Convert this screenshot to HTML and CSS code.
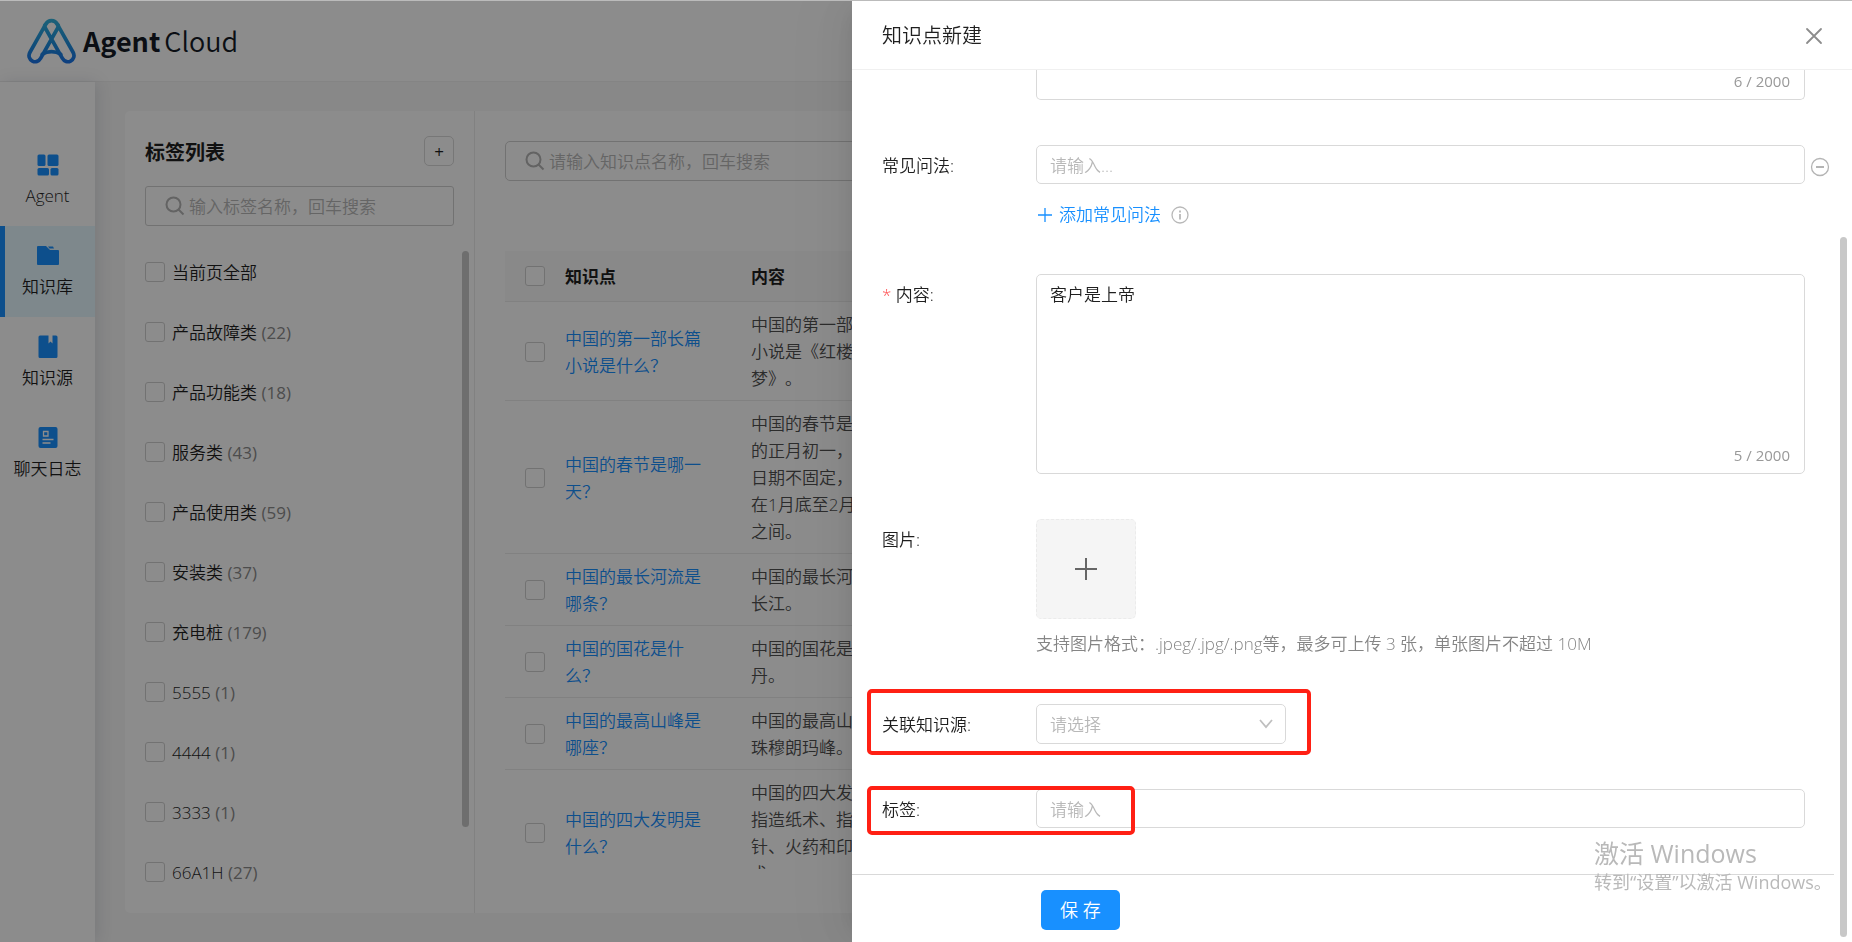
FILE: index.html
```html
<!DOCTYPE html>
<html lang="zh-CN">
<head>
<meta charset="utf-8">
<title>Agent Cloud</title>
<link rel="stylesheet" href="styles.css">
</head>
<body>
<div class="app">
  <header class="topbar">
    <svg class="logo" viewBox="0 0 50 47" width="49" height="46" fill="none" stroke="url(#lg)" stroke-width="3.800" stroke-linecap="round" stroke-linejoin="round">
      <defs><linearGradient id="lg" gradientUnits="userSpaceOnUse" x1="0" y1="0" x2="0" y2="47"><stop offset="0" stop-color="#35b4dc"/><stop offset=".55" stop-color="#1f8fdc"/><stop offset="1" stop-color="#1a72e8"/></linearGradient></defs>
      <path d="M31.500 10 14 41C12 44.500 8.500 45.500 5.500 44 2.200 42.300 1 38.500 3 35L19 6.500C21.500 1.500 28.500 1.500 31 6.500L47 35C49 38.500 47.800 42.300 44.500 44 41.500 45.500 38 44.500 36 41L18.500 10"/>
      <path d="M18.500 10C17.500 7.500 18 7 19 6.500M31.500 10C32.500 7.500 32 7 31 6.500M15.500 37C21 33.500 29 33.500 34.500 37"/>
    </svg>
    <span class="brand"><b>Agent</b><span>Cloud</span></span>
  </header>
  <div class="shell">
    <nav class="sidebar">
      <a class="nav" href="#"><svg width="24" height="24" viewBox="0 0 24 24" fill="#1890ff"><rect x="1.500" y="1.500" width="8" height="11.500" rx="1.500"/><rect x="11.500" y="1.500" width="11" height="11.500" rx="1.500"/><rect x="1.500" y="15" width="11.500" height="7.500" rx="1.500"/><rect x="14.500" y="15" width="8" height="7.500" rx="1.500"/></svg>Agent</a>
      <a class="nav active" href="#"><svg width="24" height="24" viewBox="0 0 24 24" fill="#1890ff"><path d="M2 2h8l4 4h8a1 1 0 0 1 1 1v13a1 1 0 0 1-1 1H2a1 1 0 0 1-1-1V3a1 1 0 0 1 1-1zM12 2.500h5l1 2h-4.500z"/></svg>知识库</a>
      <a class="nav" href="#"><svg width="24" height="24" viewBox="0 0 24 24" fill="#1890ff"><path d="M4 .5h8.500v8l2-2 2 2v-8H20A1.500 1.500 0 0 1 21.500 2v19.500A1.500 1.500 0 0 1 20 23H4a1.500 1.500 0 0 1-1.500-1.500V2A1.500 1.500 0 0 1 4 .5z"/></svg>知识源</a>
      <a class="nav" href="#"><svg width="24" height="24" viewBox="0 0 24 24"><rect x="2.500" y="1" width="19" height="21" rx="2" fill="#1890ff"/><path d="M7.500 5.500h4.500v4.500H7.500zM6.500 13.500h11M6.500 17h8" stroke="#fff" stroke-width="1.300" fill="none"/></svg>聊天日志</a>
    </nav>
    <main class="main">
      <section class="panel">
        <aside class="tags">
          <div class="tags-head"><h2>标签列表</h2><button class="add" aria-label="新增标签">+</button></div>
          <label class="search"><svg width="20" height="20" viewBox="0 0 20 20" fill="none" stroke="#b4b4b4" stroke-width="2"><circle cx="8.500" cy="8.500" r="7"/><path d="M13.500 13.500 18.500 18.500"/></svg><input type="text" placeholder="输入标签名称，回车搜索"></label>
          <div class="tag-scroll">
            <ul class="tag-list">
              <li><label><input type="checkbox">当前页全部</label></li>
              <li><label><input type="checkbox">产品故障类 <i>(22)</i></label></li>
              <li><label><input type="checkbox">产品功能类 <i>(18)</i></label></li>
              <li><label><input type="checkbox">服务类 <i>(43)</i></label></li>
              <li><label><input type="checkbox">产品使用类 <i>(59)</i></label></li>
              <li><label><input type="checkbox">安装类 <i>(37)</i></label></li>
              <li><label><input type="checkbox">充电桩 <i>(179)</i></label></li>
              <li><label><input type="checkbox">5555 <i>(1)</i></label></li>
              <li><label><input type="checkbox">4444 <i>(1)</i></label></li>
              <li><label><input type="checkbox">3333 <i>(1)</i></label></li>
              <li><label><input type="checkbox">66A1H <i>(27)</i></label></li>
            </ul>
            <div class="thumb"></div>
          </div>
        </aside>
        <div class="points">
          <label class="search wide"><svg width="20" height="20" viewBox="0 0 20 20" fill="none" stroke="#b4b4b4" stroke-width="2"><circle cx="8.500" cy="8.500" r="7"/><path d="M13.500 13.500 18.500 18.500"/></svg><input type="text" placeholder="请输入知识点名称，回车搜索"></label>
          <div class="table-clip">
            <table>
              <colgroup><col class="c-check"><col class="c-text"><col class="c-text"><col></colgroup>
              <thead><tr><th><input type="checkbox" aria-label="全选"></th><th>知识点</th><th>内容</th><th></th></tr></thead>
              <tbody>
                <tr><td><input type="checkbox" aria-label="选择"></td><td><a href="#">中国的第一部长篇小说是什么？</a></td><td>中国的第一部长篇小说是《红楼梦》。</td><td></td></tr>
                <tr><td><input type="checkbox" aria-label="选择"></td><td><a href="#">中国的春节是哪一天？</a></td><td>中国的春节是农历的正月初一，具体日期不固定，一般在1月底至2月中旬之间。</td><td></td></tr>
                <tr><td><input type="checkbox" aria-label="选择"></td><td><a href="#">中国的最长河流是哪条？</a></td><td>中国的最长河流是长江。</td><td></td></tr>
                <tr><td><input type="checkbox" aria-label="选择"></td><td><a href="#">中国的国花是什么？</a></td><td>中国的国花是牡丹。</td><td></td></tr>
                <tr><td><input type="checkbox" aria-label="选择"></td><td><a href="#">中国的最高山峰是哪座？</a></td><td>中国的最高山峰是珠穆朗玛峰。</td><td></td></tr>
                <tr><td><input type="checkbox" aria-label="选择"></td><td><a href="#">中国的四大发明是什么？</a></td><td>中国的四大发明是指造纸术、指南针、火药和印刷术。</td><td></td></tr>
              </tbody>
            </table>
          </div>
        </div>
      </section>
    </main>
  </div>
</div>
<div class="mask"></div>
<div class="drawer" role="dialog" aria-labelledby="dt">
  <header class="drawer-head"><h1 id="dt">知识点新建</h1><button class="icon-btn" aria-label="关闭"><svg width="20" height="20" viewBox="0 0 20 20" stroke="#8c8c8c" stroke-width="1.800" stroke-linecap="round"><path d="M3 3 17 17M17 3 3 17"/></svg></button></header>
  <form class="form">
    <div class="field"><span></span><div class="box cut"><textarea aria-label="知识点"></textarea><span class="count">6 / 2000</span></div></div>
    <div class="field"><label for="q">常见问法:</label>
      <div class="control">
        <div class="with-remove"><input class="input" id="q" type="text" placeholder="请输入..."><button type="button" class="icon-btn remove" aria-label="删除"><svg width="20" height="20" viewBox="0 0 20 20" fill="none" stroke="#b4b4b4"><circle cx="10" cy="10" r="8.500" stroke-width="1.300"/><path d="M6 10h8" stroke-width="2"/></svg></button></div>
        <div class="add-row"><button type="button" class="link-btn"><svg width="16" height="16" viewBox="0 0 16 16" stroke="#1890ff" stroke-width="1.300"><path d="M8 1v14M1 8h14"/></svg>添加常见问法</button><svg width="18" height="18" viewBox="0 0 18 18" fill="none" stroke="#b8b8b8" stroke-width="1.300"><circle cx="9" cy="9" r="8"/><path d="M9 8v5.500M9 4.500v2" stroke-width="1.800"/></svg></div>
      </div></div>
    <div class="field"><label for="c"><em>*</em> 内容:</label><div class="box"><textarea id="c">客户是上帝</textarea><span class="count">5 / 2000</span></div></div>
    <div class="field"><span class="label">图片:</span><div class="control"><button type="button" class="upload" aria-label="上传图片"><svg width="24" height="24" viewBox="0 0 24 24" stroke="#666" stroke-width="2"><path d="M12 1v22M1 12h22"/></svg></button><p class="hint">支持图片格式：.jpeg/.jpg/.png等，最多可上传 3 张，单张图片不超过 10M</p></div></div>
    <div class="field"><label for="s">关联知识源:</label><div class="select"><select id="s"><option>请选择</option></select><svg width="14" height="10" viewBox="0 0 14 10" fill="none" stroke="#bfbfbf" stroke-width="1.800"><path d="M1 1 7 8 13 1"/></svg></div><div class="mark mark-source"></div></div>
    <div class="field"><label for="t">标签:</label><input class="input" id="t" type="text" placeholder="请输入"><div class="mark mark-tag"></div></div>
    <footer class="drawer-foot"><button type="button" class="save">保 存</button></footer>
  </form>
  <div class="thumb drawer-thumb"></div>
</div>
<div class="activate"><strong>激活 Windows</strong><span>转到“设置”以激活 Windows。</span></div>
<div class="edge"></div>
</body>
</html>
```
FILE: styles.css
```css
* { box-sizing: border-box; }
body {
  margin: 0;
  height: 100vh;
  overflow: hidden;
  font: 350 17px/27px "Open Sans", "Noto Sans CJK SC", sans-serif;
  color: #1f1f1f;
  background: #f7f7f7;
  text-spacing-trim: space-all;
}
button, input, textarea, select { font: inherit; color: inherit; }
button { cursor: pointer; padding: 0; }
a { color: #1890ff; text-decoration: none; }
h1, h2, p, ul { margin: 0; padding: 0; }
::placeholder { color: #b8b8b8; opacity: 1; }

.app { height: 100%; display: flex; flex-direction: column; }
.topbar {
  flex: none;
  height: 82px;
  padding: 1px 27px 0;
  display: flex;
  align-items: center;
  gap: 7px;
  background: #fff;
  border-bottom: 1px solid #f0f0f0;
}
.brand { display: flex; gap: 4px; font: 350 27px/40px "Noto Sans CJK SC", sans-serif; color: #151b26; }
.brand b { font-weight: 700; }
.shell { flex: 1; min-height: 0; display: flex; }
.sidebar {
  flex: none;
  width: 95px;
  padding-top: 53px;
  background: #fff;
  box-shadow: 2px 0 16px rgba(0, 21, 60, .12);
}
.nav {
  height: 91px;
  padding-top: 18px;
  display: flex;
  flex-direction: column;
  align-items: center;
  gap: 5px;
  color: #1f1f1f;
}
.nav.active { background: #e6f7ff; box-shadow: inset 5px 0 #1890ff; }

.main { flex: 1; min-width: 0; padding: 29px 30px; }
.panel { height: 100%; display: flex; background: #fff; border-radius: 5px; }
.tags {
  flex: none;
  width: 350px;
  padding: 25px 0 10px 20px;
  display: flex;
  flex-direction: column;
  border-right: 1px solid #ebebeb;
}
.tags-head { display: flex; justify-content: space-between; align-items: center; height: 30px; margin: 0 20px 20px 0; }
.tags-head h2 { padding-top: 3px; font-size: 20px; line-height: 30px; font-weight: 700; }
.add {
  width: 30px;
  height: 30px;
  border: 1px solid #d9d9d9;
  border-radius: 5px;
  background: #fff;
  font-weight: 400;
}
.search {
  flex: none;
  height: 40px;
  margin-right: 20px;
  padding: 0 19px;
  display: flex;
  align-items: center;
  gap: 4px;
  border: 1px solid #d0d0d0;
  border-radius: 3px;
}
.search input { flex: 1; min-width: 0; border: 0; outline: 0; padding: 0; background: none; }
.search.wide { margin: 0; border-radius: 5px; }
input[type="checkbox"] {
  appearance: none;
  flex: none;
  display: block;
  width: 20px;
  height: 20px;
  margin: 0;
  border: 1px solid #d0d0d0;
  border-radius: 3px;
  background: #fff;
}
.tag-scroll { flex: 1; min-height: 0; margin-top: 16px; display: flex; justify-content: space-between; overflow: hidden; }
.tag-list { list-style: none; }
.tag-list label { display: flex; align-items: center; height: 60px; white-space: pre; }
.tag-list input { margin-right: 7px; }
.tag-list i { font-style: normal; font-weight: 400; color: #8c8c8c; }
.thumb { width: 7px; border-radius: 4px; background: #c8c8c8; }
.tag-scroll .thumb { margin: 9px 5px 76px 0; }

.points { flex: 1; min-width: 0; padding: 30px 30px 44px; display: flex; flex-direction: column; }
.table-clip { flex: 1; min-height: 0; margin-top: 70px; overflow: hidden; }
table { width: 100%; table-layout: fixed; border-collapse: separate; border-spacing: 0; }
.c-check { width: 40px; }
.c-text { width: 186px; }
th, td { padding: 8px 20px; border-bottom: 1px solid #ebebeb; text-align: left; }
th { height: 51px; font-weight: 700; background: #fafafa; color: #1f1f1f; }
td { padding-top: 9px; color: #505050; }
th:first-child, td:first-child { padding-right: 0; }

.mask { position: fixed; inset: 0; background: rgba(0, 0, 0, .45); }
.drawer {
  position: fixed;
  inset: 1px 0 0 auto;
  width: 54%;
  display: flex;
  flex-direction: column;
  background: #fff;
  box-shadow: -8px 0 20px -10px rgba(0, 0, 0, .08), -11px 0 35px rgba(0, 0, 0, .05), -15px 0 60px 20px rgba(0, 0, 0, .03);
}
.drawer-head {
  flex: none;
  height: 69px;
  padding: 2px 28px 0 30px;
  display: flex;
  align-items: center;
  justify-content: space-between;
  border-bottom: 1px solid #f0f0f0;
}
.drawer-head h1 { font-size: 20px; line-height: 30px; font-weight: 350; }
.icon-btn { border: 0; background: none; display: flex; }
.form { flex: 1; min-height: 0; margin-right: 18px; display: flex; flex-direction: column; gap: 45px; }
.field {
  position: relative;
  display: grid;
  grid-template-columns: 154px 1fr;
  align-items: start;
  padding: 0 29px 0 30px;
}
.field label, .label { padding-top: 2px; line-height: 38px; }
.field em { font-style: normal; color: #ff4d4f; }
.input, .box {
  width: 100%;
  border: 1px solid #d9d9d9;
  border-radius: 5px;
  background: #fff;
}
.input { height: 39px; padding: 1px 13px 0; outline: 0; }
.box { position: relative; height: 200px; padding: 6px 13px; }
.box textarea { width: 100%; height: 100%; display: block; padding: 0; border: 0; outline: 0; resize: none; background: none; }
.box.cut { height: 30px; border-top: 0; border-radius: 0 0 5px 5px; }
.count { position: absolute; right: 14px; bottom: 4px; font-size: 15px; font-weight: 400; color: #999; }
.with-remove { display: flex; align-items: center; }
.remove { margin: 5px -25px 0 5px; }
.add-row { display: flex; align-items: center; gap: 10px; margin: 17px 0 1px; }
.link-btn { display: flex; align-items: center; gap: 6px; border: 0; background: none; color: #1890ff; padding-left: 1px; }
.upload {
  display: grid;
  place-items: center;
  width: 100px;
  height: 100px;
  border: 1px dashed #ebebeb;
  border-radius: 5px;
  background: #f5f5f5;
}
.hint { margin: 11px 0 2px; color: #858585; }
.select { display: flex; align-items: center; width: 250px; height: 40px; border: 1px solid #d9d9d9; border-radius: 5px; padding-right: 12px; }
.select select { appearance: none; flex: 1; height: 100%; border: 0; outline: 0; padding: 0 13px; background: none; color: #b8b8b8; }
.mark { position: absolute; left: 15px; border: 4px solid #ff2014; border-radius: 5px; pointer-events: none; }
.mark-source { top: -15px; bottom: -11px; width: 444px; }
.mark-tag { top: -3px; bottom: -6px; width: 268px; }
.drawer-foot { border-top: 1px solid #d9d9d9; padding: 15px 189px; }
.save { width: 79px; height: 40px; border: 0; border-radius: 5px; background: #1890ff; color: #fff; font-size: 18px; }
.drawer-thumb { position: absolute; right: 5px; top: 236px; bottom: 5px; }
.activate { position: fixed; right: 24px; bottom: 46px; width: 234px; display: flex; flex-direction: column; color: #b9b9b9; white-space: nowrap; pointer-events: none; }
.activate strong { font-size: 25px; line-height: 32px; font-weight: 400; }
.activate span { font-size: 18px; line-height: 27px; font-weight: 400; }
.edge { position: fixed; inset: 0 0 auto; height: 1px; background: #bbb; }
```
